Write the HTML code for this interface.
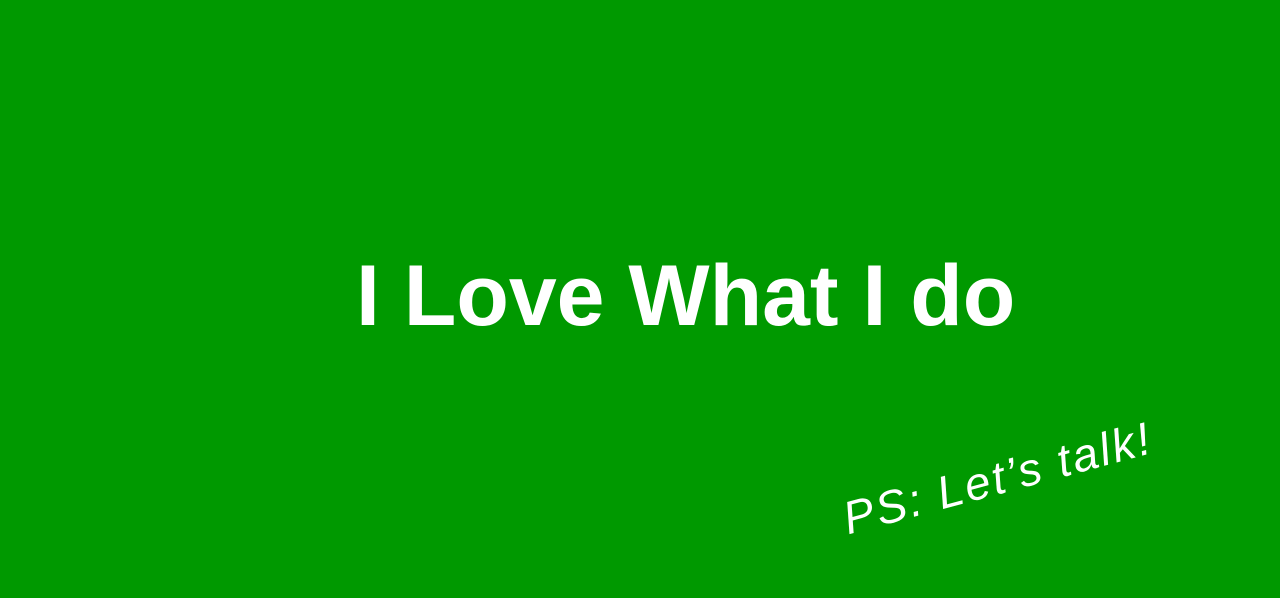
<!DOCTYPE html>
<html><head><style>
html,body{margin:0;padding:0;}
body{width:1280px;height:598px;background:#009900;position:relative;overflow:hidden;font-family:"Liberation Sans",sans-serif;}
.h{position:absolute;left:356px;top:246px;font-size:86px;font-weight:bold;color:#fff;white-space:nowrap;line-height:100px;letter-spacing:0px;}
.ps{position:absolute;left:844px;top:492px;font-size:46px;color:#fff;font-style:italic;white-space:nowrap;transform:rotate(-15deg);transform-origin:0 50%;letter-spacing:2.5px;}
</style></head><body>
<div class="h">I Love What I do</div>
<div class="ps">PS: Let’s talk!</div>
</body></html>
